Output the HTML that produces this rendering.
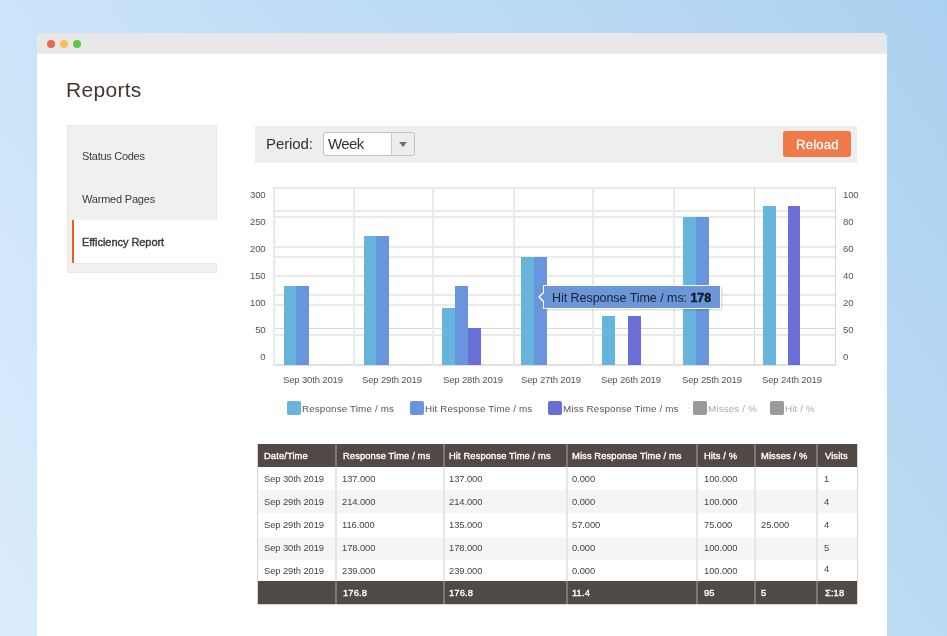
<!DOCTYPE html>
<html><head><meta charset="utf-8"><style>
html,body{margin:0;padding:0;}
body{width:947px;height:636px;overflow:hidden;position:relative;font-family:"Liberation Sans", sans-serif;
background:linear-gradient(55deg,#dbecfd 0%,#abd1f0 100%);}
.t{position:absolute;white-space:nowrap;will-change:transform;}
.r{position:absolute;}
</style></head><body>
<div class="r" style="left:37px;top:33px;width:850px;height:640px;background:#ffffff;border-radius:5px 5px 0 0;"></div>
<div class="r" style="left:37px;top:33px;width:850px;height:21px;background:#e8e8e8;border-radius:5px 5px 0 0;"></div>
<div class="r" style="left:47px;top:40px;width:8px;height:8px;background:#ec6559;border-radius:50%;"></div>
<div class="r" style="left:60px;top:40px;width:8px;height:8px;background:#f5c04f;border-radius:50%;"></div>
<div class="r" style="left:73px;top:40px;width:8px;height:8px;background:#5cc84a;border-radius:50%;"></div>
<div class="t" style="left:66px;top:79px;font-size:21px;line-height:21px;color:#41362f;font-weight:normal;letter-spacing:0.3px;">Reports</div>
<div class="r" style="left:67px;top:125px;width:150px;height:148px;background:#f0f0f0;box-sizing:border-box;border:1px solid #e8e8e8;"></div>
<div class="r" style="left:72px;top:220px;width:145px;height:43px;background:#ffffff;"></div>
<div class="r" style="left:72px;top:220px;width:2px;height:43px;background:#eb5f1a;"></div>
<div class="r" style="left:74px;top:263px;width:142px;height:1px;background:#e8e8e8;"></div>
<div class="t" style="left:82px;top:151px;font-size:11px;line-height:11px;color:#3a3a3a;font-weight:normal;letter-spacing:-0.28px;">Status Codes</div>
<div class="t" style="left:82px;top:194px;font-size:11px;line-height:11px;color:#3a3a3a;font-weight:normal;letter-spacing:-0.2px;">Warmed Pages</div>
<div class="t" style="left:82px;top:237px;font-size:11px;line-height:11px;color:#3a3a3a;font-weight:normal;letter-spacing:-0.05px;-webkit-text-stroke:0.4px #3a3a3a;">Efficiency Report</div>
<div class="r" style="left:255px;top:126px;width:602px;height:37px;background:#eeeeee;"></div>
<div class="t" style="left:266px;top:136px;font-size:15px;line-height:15px;color:#333333;font-weight:normal;letter-spacing:-0.1px;">Period:</div>
<div class="r" style="left:323px;top:132px;width:92px;height:24px;background:#ffffff;box-sizing:border-box;border:1px solid #c2c2c2;border-radius:2px;"></div>
<div class="r" style="left:391px;top:133px;width:23px;height:22px;background:#ededed;border-left:1px solid #c8c8c8;box-sizing:border-box;border-radius:0 1px 1px 0;"></div>
<div class="r" style="left:399px;top:142px;width:0;height:0;border-left:4.5px solid transparent;border-right:4.5px solid transparent;border-top:5.5px solid #6f6f6f;"></div>
<div class="t" style="left:328px;top:136px;font-size:15px;line-height:15px;color:#333333;font-weight:normal;letter-spacing:-0.6px;">Week</div>
<div class="r" style="left:783px;top:131px;width:68px;height:26px;background:#ef7b4a;border-radius:3px;"></div>
<div class="t" style="left:796px;top:138px;font-size:13.2px;line-height:13.2px;color:#ffffff;font-weight:normal;letter-spacing:0.15px;-webkit-text-stroke:0.3px #ffffff;">Reload</div>
<div class="r" style="left:273px;top:187px;width:563px;height:2px;background:#eaeaea;"></div>
<div class="r" style="left:273px;top:210px;width:563px;height:2px;background:#eaeaea;"></div>
<div class="r" style="left:273px;top:216px;width:563px;height:2px;background:#eaeaea;"></div>
<div class="r" style="left:273px;top:246px;width:563px;height:2px;background:#eaeaea;"></div>
<div class="r" style="left:273px;top:256px;width:563px;height:2px;background:#eaeaea;"></div>
<div class="r" style="left:273px;top:275px;width:563px;height:2px;background:#eaeaea;"></div>
<div class="r" style="left:273px;top:294px;width:563px;height:2px;background:#eaeaea;"></div>
<div class="r" style="left:273px;top:304px;width:563px;height:2px;background:#eaeaea;"></div>
<div class="r" style="left:273px;top:334px;width:563px;height:2px;background:#eaeaea;"></div>
<div class="r" style="left:273px;top:328px;width:563px;height:1px;background:#d9d9d9;"></div>
<div class="r" style="left:273px;top:364px;width:563px;height:2px;background:#e0e0e0;"></div>
<div class="r" style="left:273px;top:187px;width:2px;height:179px;background:#eaeaea;"></div>
<div class="r" style="left:353px;top:187px;width:2px;height:179px;background:#eaeaea;"></div>
<div class="r" style="left:432px;top:187px;width:2px;height:179px;background:#eaeaea;"></div>
<div class="r" style="left:513px;top:187px;width:2px;height:179px;background:#eaeaea;"></div>
<div class="r" style="left:592px;top:187px;width:2px;height:179px;background:#eaeaea;"></div>
<div class="r" style="left:673px;top:187px;width:2px;height:179px;background:#eaeaea;"></div>
<div class="r" style="left:754px;top:187px;width:1px;height:179px;background:#d9d9d9;"></div>
<div class="r" style="left:835px;top:187px;width:1px;height:179px;background:#d9d9d9;"></div>
<div class="r" style="left:284px;top:286px;width:12px;height:79px;background:#67b5dc;"></div>
<div class="r" style="left:296px;top:286px;width:13px;height:79px;background:#6895dd;"></div>
<div class="r" style="left:364px;top:236px;width:12px;height:129px;background:#67b5dc;"></div>
<div class="r" style="left:376px;top:236px;width:13px;height:129px;background:#6895dd;"></div>
<div class="r" style="left:442px;top:308px;width:13px;height:57px;background:#67b5dc;"></div>
<div class="r" style="left:455px;top:286px;width:13px;height:79px;background:#6895dd;"></div>
<div class="r" style="left:468px;top:328px;width:13px;height:37px;background:#6a6fd8;"></div>
<div class="r" style="left:521px;top:257px;width:13px;height:108px;background:#67b5dc;"></div>
<div class="r" style="left:534px;top:257px;width:13px;height:108px;background:#6895dd;"></div>
<div class="r" style="left:602px;top:316px;width:13px;height:49px;background:#67b5dc;"></div>
<div class="r" style="left:628px;top:316px;width:13px;height:49px;background:#6a6fd8;"></div>
<div class="r" style="left:683px;top:217px;width:13px;height:148px;background:#67b5dc;"></div>
<div class="r" style="left:696px;top:217px;width:13px;height:148px;background:#6895dd;"></div>
<div class="r" style="left:763px;top:206px;width:13px;height:159px;background:#67b5dc;"></div>
<div class="r" style="left:788px;top:206px;width:12px;height:159px;background:#6a6fd8;"></div>
<div class="t" style="left:215px;width:50.5px;text-align:right;top:189.9px;font-size:9.6px;line-height:9.6px;color:#555555;letter-spacing:-0.2px;">300</div>
<div class="t" style="left:215px;width:50.5px;text-align:right;top:216.8px;font-size:9.6px;line-height:9.6px;color:#555555;letter-spacing:-0.2px;">250</div>
<div class="t" style="left:215px;width:50.5px;text-align:right;top:243.8px;font-size:9.6px;line-height:9.6px;color:#555555;letter-spacing:-0.2px;">200</div>
<div class="t" style="left:215px;width:50.5px;text-align:right;top:270.8px;font-size:9.6px;line-height:9.6px;color:#555555;letter-spacing:-0.2px;">150</div>
<div class="t" style="left:215px;width:50.5px;text-align:right;top:297.7px;font-size:9.6px;line-height:9.6px;color:#555555;letter-spacing:-0.2px;">100</div>
<div class="t" style="left:215px;width:50.5px;text-align:right;top:324.7px;font-size:9.6px;line-height:9.6px;color:#555555;letter-spacing:-0.2px;">50</div>
<div class="t" style="left:215px;width:50.5px;text-align:right;top:351.6px;font-size:9.6px;line-height:9.6px;color:#555555;letter-spacing:-0.2px;">0</div>
<div class="t" style="left:843px;top:189.9px;font-size:9.6px;line-height:9.6px;color:#555555;letter-spacing:-0.2px;">100</div>
<div class="t" style="left:843px;top:216.8px;font-size:9.6px;line-height:9.6px;color:#555555;letter-spacing:-0.2px;">80</div>
<div class="t" style="left:843px;top:243.8px;font-size:9.6px;line-height:9.6px;color:#555555;letter-spacing:-0.2px;">60</div>
<div class="t" style="left:843px;top:270.8px;font-size:9.6px;line-height:9.6px;color:#555555;letter-spacing:-0.2px;">40</div>
<div class="t" style="left:843px;top:297.7px;font-size:9.6px;line-height:9.6px;color:#555555;letter-spacing:-0.2px;">20</div>
<div class="t" style="left:843px;top:324.7px;font-size:9.6px;line-height:9.6px;color:#555555;letter-spacing:-0.2px;">50</div>
<div class="t" style="left:843px;top:351.6px;font-size:9.6px;line-height:9.6px;color:#555555;letter-spacing:-0.2px;">0</div>
<div class="t" style="left:282.9px;top:375px;font-size:9.5px;line-height:9.5px;color:#555555;letter-spacing:-0.15px;">Sep 30th 2019</div>
<div class="t" style="left:362.4px;top:375px;font-size:9.5px;line-height:9.5px;color:#555555;letter-spacing:-0.15px;">Sep 29th 2019</div>
<div class="t" style="left:442.5px;top:375px;font-size:9.5px;line-height:9.5px;color:#555555;letter-spacing:-0.15px;">Sep 28th 2019</div>
<div class="t" style="left:520.5px;top:375px;font-size:9.5px;line-height:9.5px;color:#555555;letter-spacing:-0.15px;">Sep 27th 2019</div>
<div class="t" style="left:601.3px;top:375px;font-size:9.5px;line-height:9.5px;color:#555555;letter-spacing:-0.15px;">Sep 26th 2019</div>
<div class="t" style="left:682.1px;top:375px;font-size:9.5px;line-height:9.5px;color:#555555;letter-spacing:-0.15px;">Sep 25th 2019</div>
<div class="t" style="left:762.3px;top:375px;font-size:9.5px;line-height:9.5px;color:#555555;letter-spacing:-0.15px;">Sep 24th 2019</div>
<div class="r" style="left:287px;top:401px;width:14px;height:14px;background:#67b5dc;border-radius:2px;"></div>
<div class="t" style="left:302.2px;top:403.8px;font-size:9.8px;line-height:9.8px;color:#555555;font-weight:normal;letter-spacing:0.15px;">Response Time / ms</div>
<div class="r" style="left:410px;top:401px;width:14px;height:14px;background:#6895dd;border-radius:2px;"></div>
<div class="t" style="left:425.2px;top:403.8px;font-size:9.8px;line-height:9.8px;color:#555555;font-weight:normal;letter-spacing:0.15px;">Hit Response Time / ms</div>
<div class="r" style="left:548px;top:401px;width:14px;height:14px;background:#6a6fd8;border-radius:2px;"></div>
<div class="t" style="left:563.2px;top:403.8px;font-size:9.8px;line-height:9.8px;color:#555555;font-weight:normal;letter-spacing:0.15px;">Miss Response Time / ms</div>
<div class="r" style="left:693px;top:401px;width:14px;height:14px;background:#9a9a9a;border-radius:2px;"></div>
<div class="t" style="left:708.2px;top:403.8px;font-size:9.8px;line-height:9.8px;color:#aaaaaa;font-weight:normal;letter-spacing:0.15px;">Misses / %</div>
<div class="r" style="left:769.5px;top:401px;width:14px;height:14px;background:#9a9a9a;border-radius:2px;"></div>
<div class="t" style="left:784.7px;top:403.8px;font-size:9.8px;line-height:9.8px;color:#aaaaaa;font-weight:normal;letter-spacing:0.15px;">Hit / %</div>
<div class="r" style="left:543px;top:285px;width:178px;height:24px;background:#6b96d8;border:1px solid #ffffff;box-sizing:border-box;box-shadow:1px 1px 2px rgba(0,0,0,0.18);"></div>
<div class="r" style="left:538px;top:291px;width:0;height:0;border-top:6px solid transparent;border-bottom:6px solid transparent;border-right:6px solid #ffffff;"></div>
<div class="r" style="left:540px;top:292px;width:0;height:0;border-top:5px solid transparent;border-bottom:5px solid transparent;border-right:5px solid #6b96d8;"></div>
<div class="t" style="left:552px;top:291.5px;font-size:12.5px;line-height:12.5px;color:#1b2230;font-weight:normal;letter-spacing:-0.05px;">Hit Response Time / ms: <b style="-webkit-text-stroke:0.35px #111822;color:#111822">178</b></div>
<div class="r" style="left:257px;top:444px;width:601px;height:161px;background:#d6d6d6;"></div>
<div class="r" style="left:258px;top:445px;width:599px;height:159px;background:#ffffff;"></div>
<div class="r" style="left:258px;top:444px;width:599px;height:23px;background:#514943;"></div>
<div class="r" style="left:258px;top:467px;width:599px;height:23.2px;background:#ffffff;"></div>
<div class="r" style="left:258px;top:490px;width:599px;height:23.2px;background:#f5f5f5;"></div>
<div class="r" style="left:258px;top:513px;width:599px;height:23.2px;background:#ffffff;"></div>
<div class="r" style="left:258px;top:536.5px;width:599px;height:23.2px;background:#f5f5f5;"></div>
<div class="r" style="left:258px;top:559.5px;width:599px;height:23.2px;background:#ffffff;"></div>
<div class="r" style="left:258px;top:581px;width:599px;height:23px;background:#514943;"></div>
<div class="r" style="left:335px;top:444px;width:2px;height:23px;background:#7d7672;"></div>
<div class="r" style="left:335px;top:467px;width:2px;height:114px;background:#e6e6e6;"></div>
<div class="r" style="left:335px;top:581px;width:2px;height:23px;background:#7d7672;"></div>
<div class="r" style="left:443px;top:444px;width:2px;height:23px;background:#7d7672;"></div>
<div class="r" style="left:443px;top:467px;width:2px;height:114px;background:#e6e6e6;"></div>
<div class="r" style="left:443px;top:581px;width:2px;height:23px;background:#7d7672;"></div>
<div class="r" style="left:566px;top:444px;width:2px;height:23px;background:#7d7672;"></div>
<div class="r" style="left:566px;top:467px;width:2px;height:114px;background:#e6e6e6;"></div>
<div class="r" style="left:566px;top:581px;width:2px;height:23px;background:#7d7672;"></div>
<div class="r" style="left:696px;top:444px;width:2px;height:23px;background:#7d7672;"></div>
<div class="r" style="left:696px;top:467px;width:2px;height:114px;background:#e6e6e6;"></div>
<div class="r" style="left:696px;top:581px;width:2px;height:23px;background:#7d7672;"></div>
<div class="r" style="left:754px;top:444px;width:2px;height:23px;background:#7d7672;"></div>
<div class="r" style="left:754px;top:467px;width:2px;height:114px;background:#e6e6e6;"></div>
<div class="r" style="left:754px;top:581px;width:2px;height:23px;background:#7d7672;"></div>
<div class="r" style="left:816px;top:444px;width:2px;height:23px;background:#7d7672;"></div>
<div class="r" style="left:816px;top:467px;width:2px;height:114px;background:#e6e6e6;"></div>
<div class="r" style="left:816px;top:581px;width:2px;height:23px;background:#7d7672;"></div>
<div class="t" style="left:264.0px;top:451px;font-size:9.4px;line-height:9.4px;color:#ffffff;font-weight:normal;letter-spacing:0.1px;-webkit-text-stroke:0.35px #ffffff;">Date/Time</div>
<div class="t" style="left:342.5px;top:451px;font-size:9.4px;line-height:9.4px;color:#ffffff;font-weight:normal;letter-spacing:0.1px;-webkit-text-stroke:0.35px #ffffff;">Response Time / ms</div>
<div class="t" style="left:449.0px;top:451px;font-size:9.4px;line-height:9.4px;color:#ffffff;font-weight:normal;letter-spacing:0.1px;-webkit-text-stroke:0.35px #ffffff;">Hit Response Time / ms</div>
<div class="t" style="left:572.0px;top:451px;font-size:9.4px;line-height:9.4px;color:#ffffff;font-weight:normal;letter-spacing:0.1px;-webkit-text-stroke:0.35px #ffffff;">Miss Response Time / ms</div>
<div class="t" style="left:704.0px;top:451px;font-size:9.4px;line-height:9.4px;color:#ffffff;font-weight:normal;letter-spacing:0.1px;-webkit-text-stroke:0.35px #ffffff;">Hits / %</div>
<div class="t" style="left:761.3px;top:451px;font-size:9.4px;line-height:9.4px;color:#ffffff;font-weight:normal;letter-spacing:0.1px;-webkit-text-stroke:0.35px #ffffff;">Misses / %</div>
<div class="t" style="left:824.5px;top:451px;font-size:9.4px;line-height:9.4px;color:#ffffff;font-weight:normal;letter-spacing:0.1px;-webkit-text-stroke:0.35px #ffffff;">Visits</div>
<div class="t" style="left:263.5px;top:473.9px;font-size:9.4px;line-height:9.4px;color:#444444;font-weight:normal;letter-spacing:-0.08px;">Sep 30th 2019</div>
<div class="t" style="left:342.0px;top:473.9px;font-size:9.4px;line-height:9.4px;color:#444444;font-weight:normal;letter-spacing:-0.08px;">137.000</div>
<div class="t" style="left:448.5px;top:473.9px;font-size:9.4px;line-height:9.4px;color:#444444;font-weight:normal;letter-spacing:-0.08px;">137.000</div>
<div class="t" style="left:571.5px;top:473.9px;font-size:9.4px;line-height:9.4px;color:#444444;font-weight:normal;letter-spacing:-0.08px;">0.000</div>
<div class="t" style="left:703.8px;top:473.9px;font-size:9.4px;line-height:9.4px;color:#444444;font-weight:normal;letter-spacing:-0.08px;">100.000</div>
<div class="t" style="left:760.7px;top:473.9px;font-size:9.4px;line-height:9.4px;color:#444444;font-weight:normal;letter-spacing:-0.08px;"></div>
<div class="t" style="left:823.5px;top:473.9px;font-size:9.4px;line-height:9.4px;color:#444444;font-weight:normal;letter-spacing:-0.08px;">1</div>
<div class="t" style="left:263.5px;top:497.0px;font-size:9.4px;line-height:9.4px;color:#444444;font-weight:normal;letter-spacing:-0.08px;">Sep 29th 2019</div>
<div class="t" style="left:342.0px;top:497.0px;font-size:9.4px;line-height:9.4px;color:#444444;font-weight:normal;letter-spacing:-0.08px;">214.000</div>
<div class="t" style="left:448.5px;top:497.0px;font-size:9.4px;line-height:9.4px;color:#444444;font-weight:normal;letter-spacing:-0.08px;">214.000</div>
<div class="t" style="left:571.5px;top:497.0px;font-size:9.4px;line-height:9.4px;color:#444444;font-weight:normal;letter-spacing:-0.08px;">0.000</div>
<div class="t" style="left:703.8px;top:497.0px;font-size:9.4px;line-height:9.4px;color:#444444;font-weight:normal;letter-spacing:-0.08px;">100.000</div>
<div class="t" style="left:760.7px;top:497.0px;font-size:9.4px;line-height:9.4px;color:#444444;font-weight:normal;letter-spacing:-0.08px;"></div>
<div class="t" style="left:823.5px;top:497.0px;font-size:9.4px;line-height:9.4px;color:#444444;font-weight:normal;letter-spacing:-0.08px;">4</div>
<div class="t" style="left:263.5px;top:520.1px;font-size:9.4px;line-height:9.4px;color:#444444;font-weight:normal;letter-spacing:-0.08px;">Sep 29th 2019</div>
<div class="t" style="left:342.0px;top:520.1px;font-size:9.4px;line-height:9.4px;color:#444444;font-weight:normal;letter-spacing:-0.08px;">116.000</div>
<div class="t" style="left:448.5px;top:520.1px;font-size:9.4px;line-height:9.4px;color:#444444;font-weight:normal;letter-spacing:-0.08px;">135.000</div>
<div class="t" style="left:571.5px;top:520.1px;font-size:9.4px;line-height:9.4px;color:#444444;font-weight:normal;letter-spacing:-0.08px;">57.000</div>
<div class="t" style="left:703.8px;top:520.1px;font-size:9.4px;line-height:9.4px;color:#444444;font-weight:normal;letter-spacing:-0.08px;">75.000</div>
<div class="t" style="left:760.7px;top:520.1px;font-size:9.4px;line-height:9.4px;color:#444444;font-weight:normal;letter-spacing:-0.08px;">25.000</div>
<div class="t" style="left:823.5px;top:520.1px;font-size:9.4px;line-height:9.4px;color:#444444;font-weight:normal;letter-spacing:-0.08px;">4</div>
<div class="t" style="left:263.5px;top:543.2px;font-size:9.4px;line-height:9.4px;color:#444444;font-weight:normal;letter-spacing:-0.08px;">Sep 30th 2019</div>
<div class="t" style="left:342.0px;top:543.2px;font-size:9.4px;line-height:9.4px;color:#444444;font-weight:normal;letter-spacing:-0.08px;">178.000</div>
<div class="t" style="left:448.5px;top:543.2px;font-size:9.4px;line-height:9.4px;color:#444444;font-weight:normal;letter-spacing:-0.08px;">178.000</div>
<div class="t" style="left:571.5px;top:543.2px;font-size:9.4px;line-height:9.4px;color:#444444;font-weight:normal;letter-spacing:-0.08px;">0.000</div>
<div class="t" style="left:703.8px;top:543.2px;font-size:9.4px;line-height:9.4px;color:#444444;font-weight:normal;letter-spacing:-0.08px;">100.000</div>
<div class="t" style="left:760.7px;top:543.2px;font-size:9.4px;line-height:9.4px;color:#444444;font-weight:normal;letter-spacing:-0.08px;"></div>
<div class="t" style="left:823.5px;top:543.2px;font-size:9.4px;line-height:9.4px;color:#444444;font-weight:normal;letter-spacing:-0.08px;">5</div>
<div class="t" style="left:263.5px;top:566.3px;font-size:9.4px;line-height:9.4px;color:#444444;font-weight:normal;letter-spacing:-0.08px;">Sep 29th 2019</div>
<div class="t" style="left:342.0px;top:566.3px;font-size:9.4px;line-height:9.4px;color:#444444;font-weight:normal;letter-spacing:-0.08px;">239.000</div>
<div class="t" style="left:448.5px;top:566.3px;font-size:9.4px;line-height:9.4px;color:#444444;font-weight:normal;letter-spacing:-0.08px;">239.000</div>
<div class="t" style="left:571.5px;top:566.3px;font-size:9.4px;line-height:9.4px;color:#444444;font-weight:normal;letter-spacing:-0.08px;">0.000</div>
<div class="t" style="left:703.8px;top:566.3px;font-size:9.4px;line-height:9.4px;color:#444444;font-weight:normal;letter-spacing:-0.08px;">100.000</div>
<div class="t" style="left:760.7px;top:566.3px;font-size:9.4px;line-height:9.4px;color:#444444;font-weight:normal;letter-spacing:-0.08px;"></div>
<div class="t" style="left:823.5px;top:563.8px;font-size:9.4px;line-height:9.4px;color:#444444;font-weight:normal;letter-spacing:-0.08px;">4</div>
<div class="t" style="left:264.0px;top:588.2px;font-size:9.4px;line-height:9.4px;color:#ffffff;font-weight:normal;letter-spacing:0.1px;-webkit-text-stroke:0.35px #ffffff;"></div>
<div class="t" style="left:342.5px;top:588.2px;font-size:9.4px;line-height:9.4px;color:#ffffff;font-weight:normal;letter-spacing:0.1px;-webkit-text-stroke:0.35px #ffffff;">176.8</div>
<div class="t" style="left:449.0px;top:588.2px;font-size:9.4px;line-height:9.4px;color:#ffffff;font-weight:normal;letter-spacing:0.1px;-webkit-text-stroke:0.35px #ffffff;">176.8</div>
<div class="t" style="left:572.0px;top:588.2px;font-size:9.4px;line-height:9.4px;color:#ffffff;font-weight:normal;letter-spacing:0.1px;-webkit-text-stroke:0.35px #ffffff;">11.4</div>
<div class="t" style="left:704.0px;top:588.2px;font-size:9.4px;line-height:9.4px;color:#ffffff;font-weight:normal;letter-spacing:0.1px;-webkit-text-stroke:0.35px #ffffff;">95</div>
<div class="t" style="left:761.3px;top:588.2px;font-size:9.4px;line-height:9.4px;color:#ffffff;font-weight:normal;letter-spacing:0.1px;-webkit-text-stroke:0.35px #ffffff;">5</div>
<div class="t" style="left:824.5px;top:588.2px;font-size:9.4px;line-height:9.4px;color:#ffffff;font-weight:normal;letter-spacing:0.1px;-webkit-text-stroke:0.35px #ffffff;">&Sigma;:18</div>
</body></html>
